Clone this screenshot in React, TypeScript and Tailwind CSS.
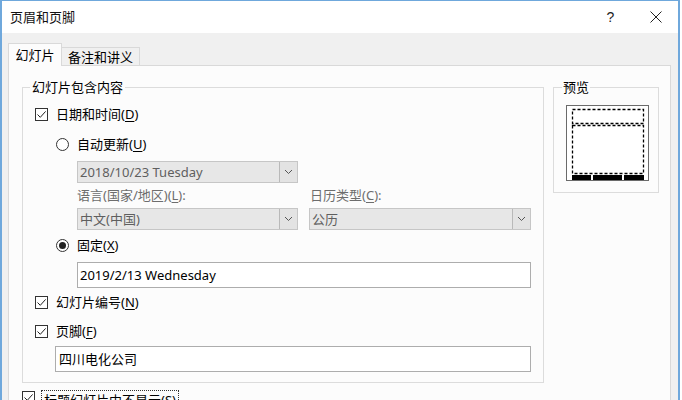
import type { ReactNode } from "react";

function CheckBox({ checked = true }: { checked?: boolean }) {
  return (
    <span className="flex h-[13px] w-[13px] shrink-0 items-center justify-center border border-[#333] bg-white">
      {checked && (
        <svg width="11" height="11" viewBox="0 0 11 11">
          <path d="M1.5 5.5L4.3 8.3L9.6 2.4" fill="none" stroke="#222" strokeWidth="1" />
        </svg>
      )}
    </span>
  );
}

function Radio({ checked = false }: { checked?: boolean }) {
  return (
    <span className="flex h-[13px] w-[13px] shrink-0 items-center justify-center rounded-full border border-[#333] bg-white">
      {checked && <span className="h-[7px] w-[7px] rounded-full bg-[#222]" />}
    </span>
  );
}

function Chevron() {
  return (
    <svg width="9" height="6" viewBox="0 0 9 6">
      <path d="M1 1L4.5 4.5L8 1" fill="none" stroke="#555" strokeWidth="1" />
    </svg>
  );
}

function Select({ value, className }: { value: string; className: string }) {
  return (
    <div className={`flex h-[22px] border border-[#c6c6c6] bg-[#e7e7e7] ${className}`}>
      <span className="flex flex-1 items-center pl-[2px] text-[#5f5f5f]">{value}</span>
      <span className="flex w-[18px] items-center justify-center border-l border-[#b9b9b9] bg-[#e3e3e3]">
        <Chevron />
      </span>
    </div>
  );
}

function Key({ children }: { children: ReactNode }) {
  return <span className="underline underline-offset-2">{children}</span>;
}

export default function App() {
  return (
    <div className="h-[400px] w-[682px] overflow-hidden bg-white font-['Noto_Sans','Noto_Sans_CJK_SC',sans-serif] text-[13px] leading-[18px] text-black">
      <div className="flex h-full w-[680px] flex-col border-x-2 border-t border-[#6fa8dc]">
        {/* title bar */}
        <div className="flex h-[32px] shrink-0 items-center bg-white pl-[8px]">
          <span className="text-[#111]">页眉和页脚</span>
          <div className="ml-auto flex h-full">
            <span className="flex w-[45px] items-center justify-center font-['Liberation_Sans',sans-serif] text-[14px] text-[#222]">
              ?
            </span>
            <span className="flex w-[45px] items-center justify-center">
              <svg width="12" height="12" viewBox="0 0 12 12">
                <path d="M0.5 0.5L11.5 11.5M11.5 0.5L0.5 11.5" stroke="#222" strokeWidth="1" />
              </svg>
            </span>
          </div>
        </div>

        <div className="flex flex-1 flex-col bg-[#f0f0f0] pl-[6px] pr-[7px]">
          {/* tabs */}
          <div className="mt-[10px] flex items-end">
            <div className="relative z-10 -mb-px flex h-[23px] w-[54px] items-center justify-center border border-b-0 border-[#d9d9d9] bg-[#fcfcfc]">
              幻灯片
            </div>
            <div className="flex h-[18px] w-[78px] items-center justify-center border border-b-0 border-l-0 border-[#d9d9d9] bg-[#f0f0f0]">
              备注和讲义
            </div>
          </div>

          {/* panel */}
          <div className="flex flex-1 flex-col border border-[#d9d9d9] bg-[#fcfcfc] pl-[13px] pt-[12px]">
            <div className="flex items-start">
              <fieldset className="w-[522px] border border-[#dcdcdc] pb-[10px]">
                <legend className="ml-[7px] px-[2px] leading-[18px]">幻灯片包含内容</legend>

                <div className="ml-[12px] mt-[8px] flex h-[20px] items-center gap-[8px]">
                  <CheckBox />
                  <span>
                    日期和时间(<Key>D</Key>)
                  </span>
                </div>

                <div className="ml-[33px] mt-[10px] flex h-[20px] items-center gap-[8px]">
                  <Radio />
                  <span>
                    自动更新(<Key>U</Key>)
                  </span>
                </div>

                <div className="ml-[54px] mt-[7px]">
                  <Select value="2018/10/23 Tuesday" className="w-[221px]" />
                </div>

                <div className="ml-[54px] mt-[3px] flex h-[18px] items-center text-[#6d6d6d]">
                  <span className="w-[232px]">
                    语言(国家/地区)(<Key>L</Key>):
                  </span>
                  <span className="pl-px">
                    日历类型(<Key>C</Key>):
                  </span>
                </div>

                <div className="ml-[54px] mt-[4px] flex gap-[11px]">
                  <Select value="中文(中国)" className="w-[221px]" />
                  <Select value="公历" className="w-[222px]" />
                </div>

                <div className="ml-[33px] mt-[5px] flex h-[20px] items-center gap-[8px]">
                  <Radio checked />
                  <span>
                    固定(<Key>X</Key>)
                  </span>
                </div>

                <div className="ml-[54px] mt-[7px] flex h-[26px] w-[454px] items-center border border-[#adadad] bg-white pl-[2px]">
                  2019/2/13 Wednesday
                </div>

                <div className="ml-[12px] mt-[4px] flex h-[20px] items-center gap-[8px]">
                  <CheckBox />
                  <span>
                    幻灯片编号(<Key>N</Key>)
                  </span>
                </div>

                <div className="ml-[12px] mt-[9px] flex h-[20px] items-center gap-[8px]">
                  <CheckBox />
                  <span>
                    页脚(<Key>F</Key>)
                  </span>
                </div>

                <div className="ml-[32px] mt-[5px] flex h-[26px] w-[476px] items-center border border-[#adadad] bg-white pl-[3px]">
                  四川电化公司
                </div>
              </fieldset>

              <fieldset className="ml-[9px] w-[106px] border border-[#dcdcdc] pb-[11px]">
                <legend className="ml-[8px] px-[1px] leading-[18px]">预览</legend>
                <svg width="83" height="76" viewBox="0 0 83 76" className="ml-[12px] mt-[9px] block">
                  <rect x="0.5" y="0.5" width="82" height="75" fill="#fff" stroke="#6a6a6a" />
                  <rect x="6.5" y="4.5" width="71" height="14" fill="none" stroke="#000" strokeWidth="1.3" strokeDasharray="3 2" />
                  <rect x="6.5" y="20.5" width="71" height="48" fill="none" stroke="#000" strokeWidth="1.3" strokeDasharray="3 2" />
                  <rect x="6" y="70" width="19" height="5" fill="#000" />
                  <rect x="27" y="70" width="29" height="5" fill="#000" />
                  <rect x="58" y="70" width="20" height="5" fill="#000" />
                </svg>
              </fieldset>
            </div>

            <div className="mt-[7px] flex items-start gap-[6px]">
              <span className="mt-[1px]">
                <CheckBox />
              </span>
              <span className="border border-dotted border-[#333] px-[2px]">
                标题幻灯片中不显示(<Key>S</Key>)
              </span>
            </div>
          </div>
        </div>
      </div>
    </div>
  );
}
